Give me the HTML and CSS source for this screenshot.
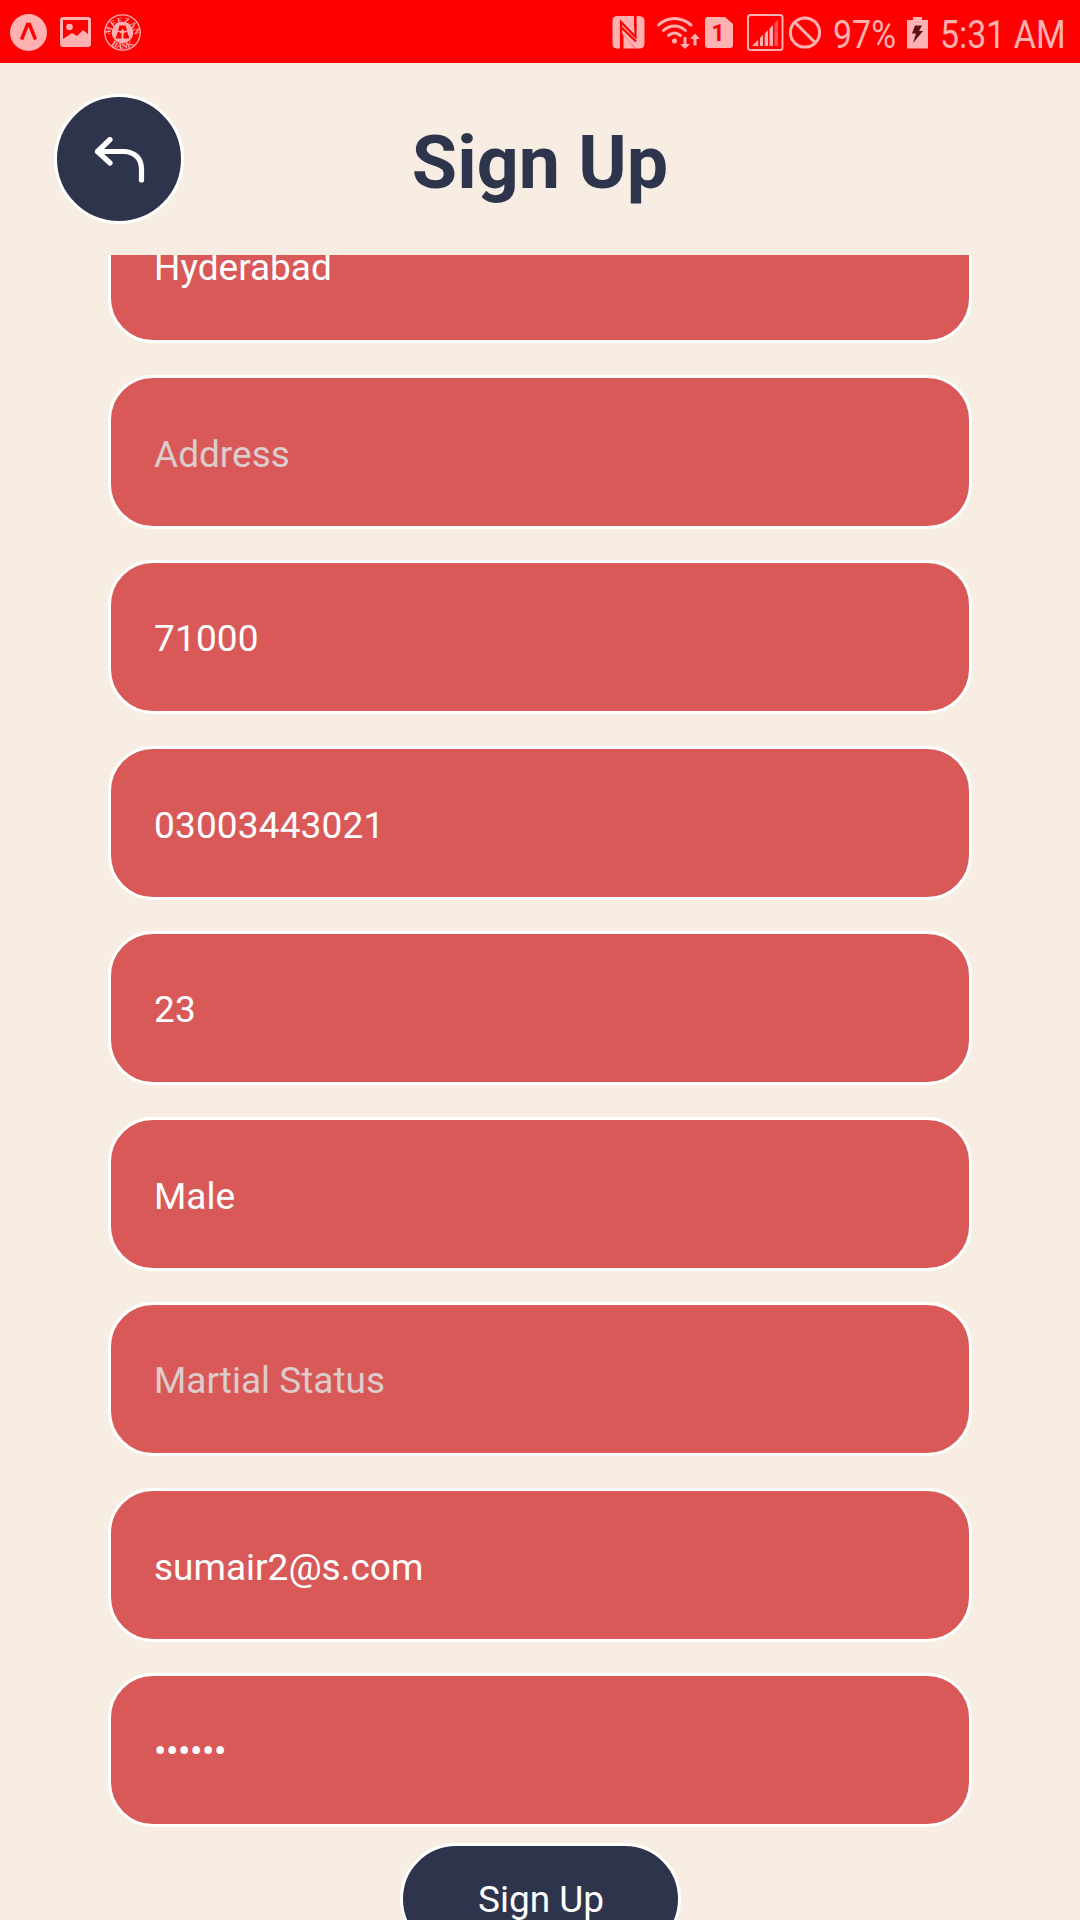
FILE: index.html
```html
<!DOCTYPE html>
<html lang="en">
<head>
<meta charset="utf-8">
<title>Sign Up</title>
<link rel="stylesheet" href="styles.css">
</head>
<body>
<div class="screen">
  <div class="statusbar">
    <svg class="status-icons" width="150" height="63" viewBox="0 0 150 63">
      <circle cx="28.500" cy="32.500" r="18.500" fill="#ffb0b0"/>
      <path d="M21.500 39.500L27.500 24.500H29.500L35.500 39.500" fill="none" stroke="#f00" stroke-width="3.400"/>
      <path fill="#ffb0b0" fill-rule="evenodd" d="M63 17h25q3 0 3 3v24q0 3-3 3H63q-3 0-3-3V20q0-3 3-3zM63 20v19l9-6 5 3 6-6 5 4V20z"/>
      <circle cx="69.500" cy="27" r="3.300" fill="#ffb0b0"/>
      <circle cx="122.500" cy="32.500" r="17.700" fill="none" stroke="#ffb0b0" stroke-width="1.300"/>
      <path id="sealTop" d="M111 38.500A12 12 0 1 1 134 38.500" fill="none"/>
      <path id="sealBottom" d="M107 39A17 17 0 0 0 138 39" fill="none"/>
      <text class="seal"><textPath href="#sealTop" startOffset="50%" text-anchor="middle">MEEZAN</textPath></text>
      <text class="seal"><textPath href="#sealBottom" startOffset="50%" text-anchor="middle">BANK</textPath></text>
      <circle cx="122.500" cy="32.500" r="10.700" fill="#ffb0b0"/>
      <path d="M119.500 25.500h6l1.500 5-3 .5-1.500-2.500-1.500 2.500-3-.5zM118 31.500l3.500 2v5h-6zM127 31.500l-3.500 2v5h6z" fill="#f00"/>
    </svg>
    <svg class="status-icons" width="225" height="63" viewBox="608 0 225 63" fill="#ffb0b0">
      <path d="M617 16h8l10.500 14V16.500q4-1 6 0 3 1 3 4v23q0 5-5 5h-4L621.500 33v14.500q-2 1.500-5 1-4-.5-4-4V20q0-3.500 4.500-4z"/>
      <path d="M625 16h9v13z"/>
      <path d="M623.500 35L635 48.500h-11.500z"/>
      <path d="M621 49V27L636 41.500M621 28V22L635.500 37V15.500" fill="none" stroke="#f00" stroke-width="2.200"/>
      <g fill="none" stroke="#ffb0b0" stroke-width="3" stroke-linecap="round">
        <path d="M658.500 25q7-6.500 16-6.500t16.500 6.500"/>
        <path d="M663.500 30.500q5-4.500 11-4.500t11 4.500"/>
        <path d="M668.500 35.500q3-2.500 6-2.500t6 2.500"/>
      </g>
      <circle cx="674.500" cy="41" r="2.500"/>
      <path d="M683.500 37h3v7h3.500l-5 5-5-5h3.500zM693.500 45.500V39H690l5-5.500 5 5.500h-3.500v6.500z"/>
      <path d="M708 17h17l8 7v21q0 3-3 3h-22q-3 0-3-3V20q0-3 3-3z"/>
      <text class="sim" x="718" y="41" text-anchor="middle">1</text>
      <rect x="748" y="15" width="34.500" height="35" rx="2.500" fill="none" stroke="#ffb0b0" stroke-width="2"/>
      <path d="M752 46l6.200-6v6zM760 38l3-3v11h-3zM764.700 33.500l3.300-3.500v16h-3.300zM769.500 28.500l3.500-3.500v21h-3.500z"/>
      <path d="M774.500 23.500l3.500-4v26.500h-3.500z" opacity=".45"/>
      <circle cx="805" cy="32.500" r="14.600" fill="none" stroke="#ffb0b0" stroke-width="3"/>
      <path d="M794.500 22L815.500 43" stroke="#ffb0b0" stroke-width="3"/>
    </svg>
    <span class="status-text battery-text">97%</span>
    <svg class="battery" width="21" height="63" viewBox="0 0 21 63">
      <path d="M6 17h9v3h6v28.500H0V20h6z" fill="#ffb0b0"/>
      <path d="M8 25.500h7l-3 5.500h4L6 43l3-9.500H5z" fill="#5c1010"/>
    </svg>
    <span class="status-text clock">5:31 AM</span>
  </div>
  <header class="header">
    <button class="back" aria-label="Back">
      <svg width="54" height="54" viewBox="0 0 54 54" fill="none" stroke="#fff" stroke-width="5.200" stroke-linecap="round" stroke-linejoin="round">
        <path d="M17 2.500L4.500 14.500 17 26M4.500 14.500H32Q48.500 16.500 48.500 32.500V43"/>
      </svg>
    </button>
    <h1 class="title">Sign Up</h1>
  </header>
  <main class="form">
    <div class="field"><span>Hyderabad</span></div>
    <div class="field placeholder"><span>Address</span></div>
    <div class="field number"><span>71000</span></div>
    <div class="field number"><span>03003443021</span></div>
    <div class="field number"><span>23</span></div>
    <div class="field"><span>Male</span></div>
    <div class="field placeholder"><span>Martial Status</span></div>
    <div class="field"><span>sumair2@s.com</span></div>
    <div class="field password"><span>••••••</span></div>
    <button class="submit">Sign Up</button>
  </main>
</div>
</body>
</html>
```
FILE: styles.css
```css
* { box-sizing: border-box; }
body { margin: 0; }
.screen {
  width: 1080px;
  height: 1920px;
  display: flex;
  flex-direction: column;
  overflow: hidden;
  background: #f7ede2;
  font-family: Roboto, sans-serif;
}
.statusbar {
  flex: none;
  display: flex;
  height: 63px;
  background: #f00;
  color: #ffb0b0;
}
.status-icons, .battery { flex: none; display: block; }
.status-icons + .status-icons { margin-left: 458px; }
.status-text {
  flex: none;
  font-size: 39px;
  line-height: 71px;
  white-space: nowrap;
  transform: scaleX(.87);
  transform-origin: left;
}
.battery-text { width: 74px; }
.clock { width: 125px; margin-left: 12px; }
.seal { font: 700 8.500px "Liberation Serif", serif; fill: #ffb0b0; }
.sim { font: 700 23px Roboto, sans-serif; fill: #f00; }
.header {
  flex: none;
  display: grid;
  grid-template-columns: 200px 1fr 200px;
  height: 192px;
}
.back {
  display: flex;
  width: 130px;
  height: 130px;
  margin: 31px 0 0 54px;
  padding: 40px 0 0 36px;
  border: 3px solid #fff;
  border-radius: 50%;
  background: #2e344c;
}
.title {
  margin: 56px 0 0;
  color: #2e344c;
  font-size: 73.600px;
  line-height: 88px;
  font-weight: 700;
  text-align: center;
}
.form {
  flex: 1;
  min-height: 0;
  display: flex;
  flex-direction: column;
  align-items: center;
  overflow: hidden;
}
.field {
  flex: none;
  display: flex;
  align-items: center;
  width: 864px;
  height: 154px;
  margin-bottom: 31.430px;
  padding: 4px 43px 0;
  border: 3px solid #fff;
  border-radius: 45px;
  background: #d95959;
  color: #fff;
  font-size: 37px;
  line-height: 44px;
}
.field:first-child {
  height: 153.400px;
  margin: -65.430px 0 32.030px;
  padding-top: 3px;
}
.field:nth-child(even) { padding-top: 6px; }
.placeholder { color: #dccccc; }
.number { letter-spacing: .15px; }
.password {
  margin-bottom: 16px;
  padding-top: 5px;
  letter-spacing: -.5px;
}
.submit {
  flex: none;
  width: 281px;
  height: 112px;
  padding: 2px 0 0 2px;
  border: 3px solid #fff;
  border-radius: 56px;
  background: #2e344c;
  color: #fff;
  font: 37px/44px Roboto, sans-serif;
}
```
